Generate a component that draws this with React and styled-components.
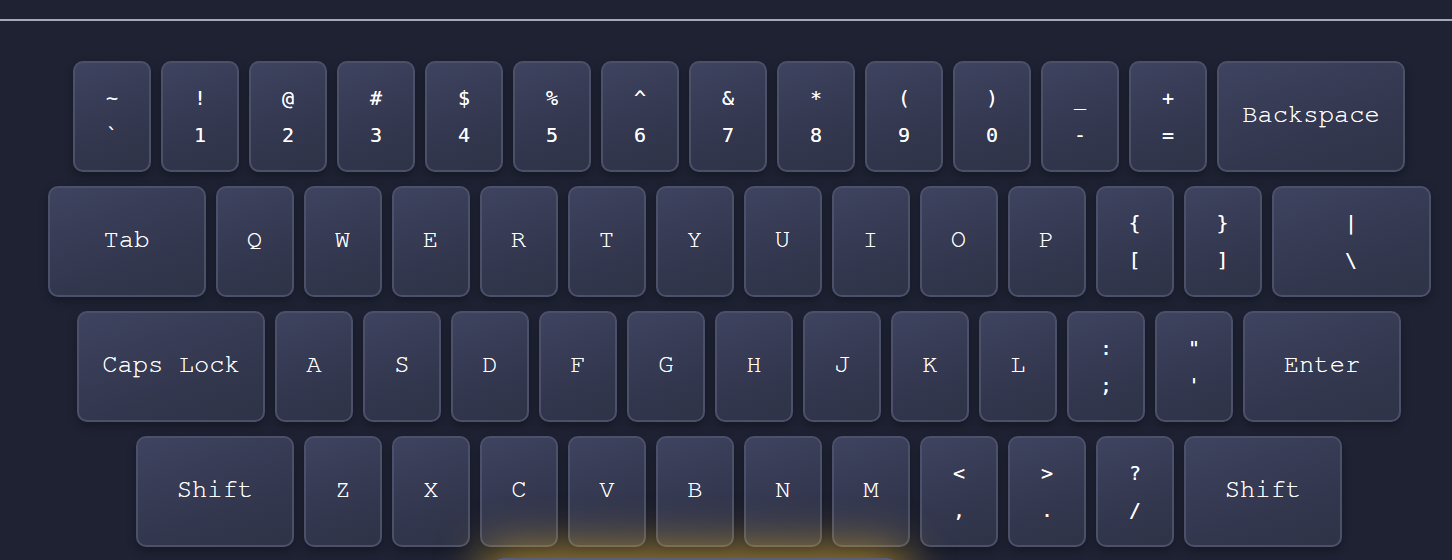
import React from 'react';
import styled, { createGlobalStyle } from 'styled-components';

const GlobalStyle = createGlobalStyle`
  html, body {
    margin: 0;
    padding: 0;
    background: #1e2233;
    overflow: hidden;
  }
`;

const Page = styled.div`
  min-height: 560px;
  background: #1e2233;
`;

const TopBar = styled.div`
  height: 19px;
  border-bottom: 2px solid #a4a8be;
`;

const Keyboard = styled.div`
  display: flex;
  flex-direction: column;
  gap: 14px;
  padding: 40px 0 0 26px;
`;

const Row = styled.div`
  display: flex;
  justify-content: center;
  gap: 10px;
`;

const SpaceRow = styled(Row)`
  margin-top: -3px;
`;

const Key = styled.div`
  box-sizing: border-box;
  flex: 0 0 auto;
  width: ${(p) => p.$w || 78}px;
  height: 111px;
  border: 2px solid #4c5169;
  border-radius: 10px;
  background: linear-gradient(160deg, #3e4360 0%, #343850 55%, #2f3347 100%);
  box-shadow: 0 4px 10px rgba(0, 0, 0, 0.3);
  color: #ffffff;
  text-shadow: 0 0 0.6px rgba(255, 255, 255, 0.7);
  display: flex;
  flex-direction: column;
  align-items: center;
  justify-content: center;
  gap: 17px;
  padding-bottom: ${(p) => (p.$dual ? 0 : 4)}px;
  font-family: 'Nimbus Mono PS', 'Nimbus Mono L', FreeMono, Courier, 'Liberation Mono', monospace;
  font-size: 25.5px;
  line-height: 1;
`;

const Sym = styled.span`
  font-family: 'DejaVu Sans Mono', monospace;
  font-size: 20px;
  line-height: 20px;
`;

const SpaceKey = styled.div`
  box-sizing: border-box;
  width: 406px;
  height: 111px;
  margin-right: 88px;
  border: 2px solid #5a5f78;
  border-radius: 10px;
  background: linear-gradient(160deg, #4b506c 0%, #41455e 100%);
  box-shadow: 0 0 45px 10px rgba(240, 185, 40, 0.6);
`;

const rows = [
  [['~', '`'], ['!', '1'], ['@', '2'], ['#', '3'], ['$', '4'], ['%', '5'], ['^', '6'], ['&', '7'], ['*', '8'], ['(', '9'], [')', '0'], ['_', '-'], ['+', '='], ['Backspace', null, 188]],
  [['Tab', null, 158], 'Q', 'W', 'E', 'R', 'T', 'Y', 'U', 'I', 'O', 'P', ['{', '['], ['}', ']'], ['|', '\\', 159]],
  [['Caps Lock', null, 188], 'A', 'S', 'D', 'F', 'G', 'H', 'J', 'K', 'L', [':', ';'], ['"', "'"], ['Enter', null, 158]],
  [['Shift', null, 158], 'Z', 'X', 'C', 'V', 'B', 'N', 'M', ['<', ','], ['>', '.'], ['?', '/'], ['Shift', null, 158]],
];

const renderKey = (k, i) => {
  if (typeof k === 'string') return <Key key={i}>{k}</Key>;
  const [top, bottom, w] = k;
  if (bottom === null) return <Key key={i} $w={w}>{top}</Key>;
  return (
    <Key key={i} $w={w} $dual>
      <Sym>{top}</Sym>
      <Sym>{bottom}</Sym>
    </Key>
  );
};

export default function App() {
  return (
    <Page>
      <GlobalStyle />
      <TopBar />
      <Keyboard>
        {rows.map((r, i) => (
          <Row key={i}>{r.map(renderKey)}</Row>
        ))}
        <SpaceRow>
          <SpaceKey />
        </SpaceRow>
      </Keyboard>
    </Page>
  );
}
